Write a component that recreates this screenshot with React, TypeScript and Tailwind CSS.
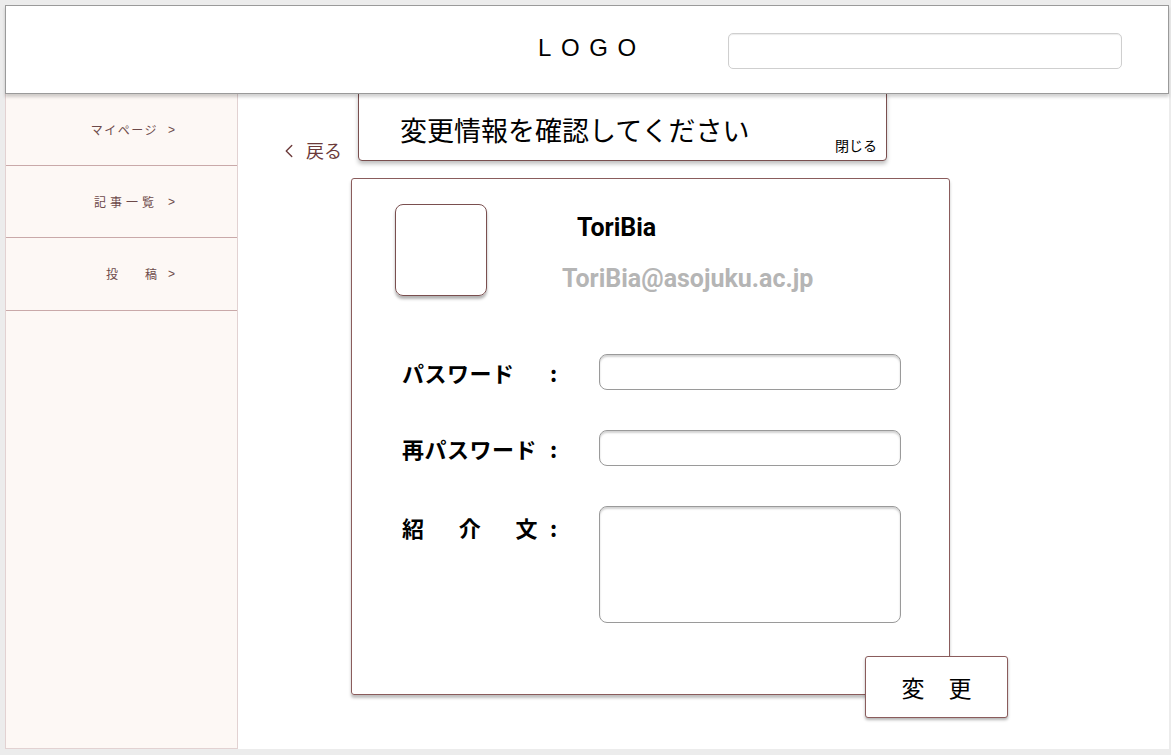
import { ChevronLeft } from "lucide-react";

const jp = "font-['Noto_Sans_CJK_JP','Noto_Sans',sans-serif]";

const navItems = [
    { label: "マイページ", cls: "tracking-[1.5px]", h: "h-[72px]" },
    { label: "記事一覧", cls: "tracking-[4px]", h: "h-[72px]" },
    { label: "投　　稿", cls: "tracking-[1px]", h: "h-[73px]" },
];

const Field = ({ label, tall }: { label: React.ReactNode; tall?: boolean }) => (
    <div className={`flex ${tall ? "items-start" : "items-center"}`}>
        <div
            className={`w-[197px] shrink-0 flex text-[22px] font-bold text-black tracking-[0.5px] ${tall ? "pt-[5px]" : ""}`}
        >
            <span className="w-[148px]">{label}</span>
            <span>:</span>
        </div>
        {tall ? (
            <textarea className="w-[302px] h-[117px] rounded-[8px] border border-[#9a9a9a] bg-white shadow-[inset_0_2px_2px_rgba(0,0,0,0.18)] resize-none outline-none" />
        ) : (
            <input className="w-[302px] h-[36px] rounded-[8px] border border-[#9a9a9a] bg-white shadow-[inset_0_2px_2px_rgba(0,0,0,0.18)] outline-none" />
        )}
    </div>
);

const App = () => {
    return (
        <div className={`w-[1171px] h-[755px] bg-[#ececec] pt-[5px] pl-[5px] pr-[2px] overflow-hidden ${jp}`}>
            <div className="flex flex-col h-[744px] bg-white">
                {/* header */}
                <header className="relative z-10 h-[89px] shrink-0 grid grid-cols-[1fr_auto_1fr] items-center border border-[#9a9a9a] bg-white shadow-[0_3px_3px_rgba(0,0,0,0.18)]">
                    <div />
                    <div className="pl-[10px] font-['Liberation_Sans',Arial,sans-serif] text-[24px] tracking-[0.4em] text-black -mt-[3px]">
                        LOGO
                    </div>
                    <div className="pl-[82px] mt-[2px]">
                        <input className="w-[394px] h-[36px] rounded-[5px] border border-[#cfcfcf] shadow-[inset_0_1px_1px_rgba(0,0,0,0.08)] outline-none" />
                    </div>
                </header>

                <div className="flex flex-1 min-h-0">
                    {/* sidebar */}
                    <aside className="w-[233px] shrink-0 bg-[#fdf8f5] border-x border-b border-[#e2d2d2]">
                        {navItems.map((item) => (
                            <div
                                key={item.label}
                                className={`${item.h} flex items-center justify-end pr-[62px] border-b border-[#c9a9a9] text-[12px] text-[#6d4a4a]`}
                            >
                                <span className={item.cls}>{item.label}</span>
                                <span className="ml-[10px] font-['Liberation_Sans',sans-serif]">&gt;</span>
                            </div>
                        ))}
                    </aside>

                    {/* main */}
                    <main className="relative flex-1 pl-[44px] pt-[43px]">
                        <div className="flex items-center text-[18px] text-[#6b3a3a]">
                            <ChevronLeft className="w-[22px] h-[22px] -ml-[4px] mr-[6px]" strokeWidth={1.5} />
                            戻る
                        </div>

                        {/* confirmation banner */}
                        <div className="absolute left-[120px] -top-[1px] w-[529px] h-[68px] bg-white border border-[#7a4f4f] rounded-b-[4px] shadow-[0_3px_4px_rgba(0,0,0,0.25)]">
                            <p className="absolute left-[41px] top-[22px] text-[27px] text-black leading-none">
                                変更情報を確認してください
                            </p>
                            <p className="absolute right-[9px] top-[44px] text-[14px] text-black leading-none">
                                閉じる
                            </p>
                        </div>

                        <div className="relative ml-[69px] mt-[14px] w-[599px] h-[517px] border border-[#8a5c5c] rounded-[3px] shadow-[0_3px_3px_rgba(0,0,0,0.25)] pt-[25px] pl-[43px]">
                            <div className="flex">
                                <div className="w-[92px] h-[92px] rounded-[8px] border border-[#7a4f4f] shadow-[0_3px_3px_rgba(0,0,0,0.3)]" />
                                <div className="ml-[75px] font-['Roboto',sans-serif] font-bold">
                                    <p className="ml-[15px] mt-[11px] text-[25px] text-black leading-none">ToriBia</p>
                                    <p className="mt-[26px] text-[25px] text-[#b5b5b5] leading-none">ToriBia@asojuku.ac.jp</p>
                                </div>
                            </div>

                            <div className="mt-[58px] ml-[7px] flex flex-col gap-[40px]">
                                <Field label="パスワード" />
                                <Field label="再パスワード" />
                                <Field
                                    label={
                                        <span className="flex justify-between w-[136px]">
                                            <span>紹</span>
                                            <span>介</span>
                                            <span>文</span>
                                        </span>
                                    }
                                    tall
                                />
                            </div>

                            <button className="absolute left-[513px] top-[477px] w-[143px] h-[62px] bg-white border border-[#8a5c5c] rounded-[3px] shadow-[0_2px_3px_rgba(0,0,0,0.3)] text-[23px] text-black tracking-[24px] pl-[24px]">
                                変更
                            </button>
                        </div>
                    </main>
                </div>
            </div>
        </div>
    );
};

export default App;
